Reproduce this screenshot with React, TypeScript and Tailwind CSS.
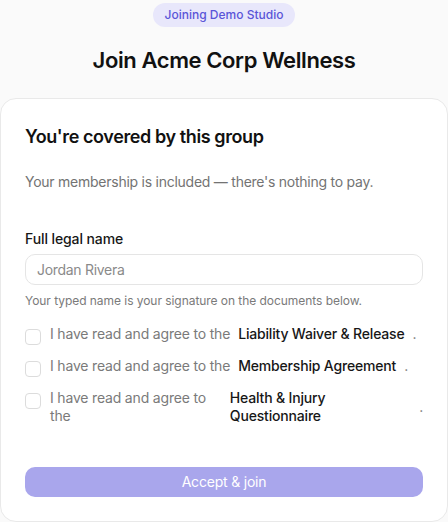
import React from "react";

const docs = [
  "Liability Waiver & Release",
  "Membership Agreement",
  "Health & Injury Questionnaire",
];

export default function App() {
  return (
    <div
      className="min-h-screen w-full bg-[#fafafa] flex flex-col items-center text-[#111111]"
      style={{ fontFamily: "Inter, 'Noto Sans', sans-serif" }}
    >
      <div className="mt-[3px] rounded-full bg-[#e8e7fb] px-3 py-1 text-xs leading-4 font-medium text-[#5a55d8]">
        Joining Demo Studio
      </div>
      <h1 className="mt-[17px] text-[22px] leading-8 font-semibold tracking-[-0.4px] text-[#111111]">
        Join Acme Corp Wellness
      </h1>
      <div className="mt-[22px] w-full rounded-2xl border border-[#e9e9e9] bg-white p-6">
        <h2 className="text-lg leading-7 font-semibold tracking-[-0.4px] text-[#111111]">
          You're covered by this group
        </h2>
        <p className="mt-[21px] text-sm leading-5 tracking-[-0.25px] text-[#737373]">
          Your membership is included — there's nothing to pay.
        </p>
        <label className="mt-[37px] block text-sm leading-5 font-medium tracking-[-0.1px] text-[#171717]">
          Full legal name
        </label>
        <div className="mt-[5px] flex h-[31px] w-full items-center rounded-[10px] border border-[#e5e5e5] bg-white px-[11px] text-sm tracking-[-0.3px] text-[#8a8a8a]">
          Jordan Rivera
        </div>
        <p className="mt-2 text-xs leading-4 tracking-[-0.05px] text-[#7a7a7a]">
          Your typed name is your signature on the documents below.
        </p>
        <div className="mt-4 flex flex-col gap-3">
          {docs.map((d) => (
            <div key={d} className="flex items-start gap-[9px]">
              <span className="mt-1 h-4 w-4 shrink-0 rounded-[4px] border border-[#dcdcdc] bg-white" />
              <span className="flex min-w-0 flex-1 items-center gap-2 text-sm leading-[18px] tracking-[-0.18px]">
                <span className="text-[#7a7a7a]">I have read and agree to the</span>
                <span className="font-medium text-[#171717]">{d}</span>
                <span className="text-[#7a7a7a]">.</span>
              </span>
            </div>
          ))}
        </div>
        <button className="mt-[42px] flex h-[30px] w-full items-center justify-center rounded-[10px] bg-[#a9a6ec] text-sm tracking-[-0.2px] text-white">
          Accept &amp; join
        </button>
      </div>
    </div>
  );
}
